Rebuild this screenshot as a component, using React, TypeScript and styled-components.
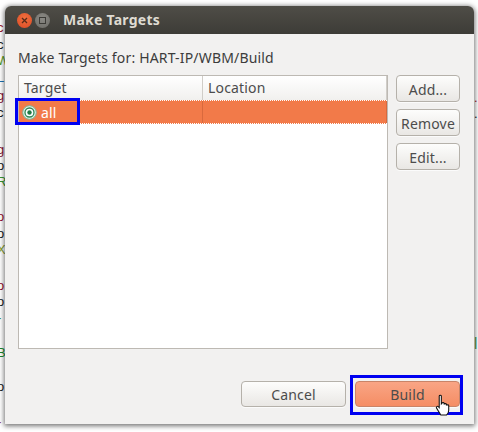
import React from 'react';
import styled, { createGlobalStyle } from 'styled-components';

const Global = createGlobalStyle`
  html, body { margin: 0; padding: 0; background: #fff; }
  body { font-family: "Noto Sans", "Open Sans", sans-serif; }
`;

const Desktop = styled.div`
  position: relative;
  width: 478px;
  height: 432px;
  overflow: hidden;
  background: #fff;
`;

const Scraps = styled.div`
  position: absolute;
  top: 0;
  width: 5px;
  height: 432px;
  overflow: hidden;
  font: 13px/16px "Liberation Sans", sans-serif;
  white-space: pre;
`;
const LeftScraps = styled(Scraps)`
  left: 0;
  padding-top: 20px;
`;
const RightScraps = styled(Scraps)`
  right: 0;
  width: 4px;
  padding-top: 90px;
  text-align: left;
`;
const Scrap = styled.div<{ $c: string; $gap?: number }>`
  height: 16px;
  color: ${(p) => p.$c};
  margin-top: ${(p) => p.$gap ?? 0}px;
  text-indent: -3px;
`;
const RightScrap = styled(Scrap)`
  text-indent: 0;
`;

const Window = styled.div`
  position: absolute;
  left: 5px;
  top: 6px;
  width: 469px;
  height: 418px;
  display: flex;
  flex-direction: column;
  background: #f2f1f0;
  border-radius: 6px 6px 0 0;
  box-shadow: 0 1px 5px 1px rgba(0, 0, 0, 0.55);
`;

const TitleBar = styled.div`
  height: 28px;
  flex: none;
  display: flex;
  align-items: center;
  padding-left: 12px;
  background: linear-gradient(#4f4d47, #3d3c37);
  border-radius: 6px 6px 0 0;
`;
const WinButton = styled.div<{ $close?: boolean }>`
  width: 15px;
  height: 15px;
  border-radius: 50%;
  margin-right: 3px;
  display: flex;
  align-items: center;
  justify-content: center;
  background: ${(p) => (p.$close ? 'radial-gradient(circle at 50% 35%, #f0703f, #dc4a24)' : 'radial-gradient(circle at 50% 35%, #8b8a85, #6c6b66)')};
`;
const Title = styled.div`
  margin-left: 10px;
  margin-top: -2px;
  font-size: 14px;
  font-weight: 700;
  letter-spacing: 0.25px;
  color: #dfdbd2;
`;

const Body = styled.div`
  flex: 1;
  display: flex;
  flex-direction: column;
  padding: 14px 14px 17px 13px;
  letter-spacing: 0.17px;
`;
const Caption = styled.div`
  height: 21px;
  font-size: 14px;
  line-height: 20px;
  color: #3c3c3c;
  margin-bottom: 6px;
`;
const Main = styled.div`
  flex: 1;
  display: flex;
  gap: 8px;
`;
const Table = styled.div`
  position: relative;
  width: 370px;
  height: 274px;
  box-sizing: border-box;
  background: #fff;
  border: 1px solid #bdb9b3;
`;
const HeaderRow = styled.div`
  display: flex;
  height: 24px;
  background: linear-gradient(#ffffff, #f1f0ee);
`;
const HeaderCell = styled.div<{ $w: number }>`
  width: ${(p) => p.$w}px;
  box-sizing: border-box;
  padding-left: 5px;
  font-size: 14px;
  line-height: 24px;
  color: #4c4c4c;
  border-right: 1px solid #d0cdc8;
`;
const Row = styled.div`
  display: flex;
  height: 24px;
  background: #f27a49;
  border-top: 1px dotted #fff;
  border-bottom: 1px dotted #fff;
  box-sizing: border-box;
`;
const Cell = styled.div<{ $w: number }>`
  width: ${(p) => p.$w}px;
  box-sizing: border-box;
  display: flex;
  align-items: center;
  padding-left: 3px;
  gap: 4px;
  font-size: 14px;
  color: #fff;
  border-right: 1px solid #d9693d;
`;
const SideButtons = styled.div`
  display: flex;
  flex-direction: column;
  gap: 7px;
  width: 64px;
`;
const Button = styled.div<{ $primary?: boolean; $wide?: boolean }>`
  width: ${(p) => (p.$wide ? '105px' : '64px')};
  height: ${(p) => (p.$wide ? '26px' : '27px')};
  padding-top: ${(p) => (p.$wide ? '0' : '1px')};
  box-sizing: border-box;
  display: flex;
  align-items: center;
  justify-content: center;
  font-size: 14px;
  color: #4c4c4c;
  border-radius: 4px;
  border: 1px solid ${(p) => (p.$primary ? '#c98468' : '#b5b1aa')};
  background: ${(p) => (p.$primary ? 'linear-gradient(#f9a585, #f58d64)' : 'linear-gradient(#fdfdfc, #e9e7e4)')};
  box-shadow: 0 1px 0 rgba(255, 255, 255, 0.7);
`;
const Footer = styled.div`
  display: flex;
  justify-content: flex-end;
  gap: 9px;
  position: relative;
`;
const HighlightAll = styled.div`
  position: absolute;
  left: -4px;
  top: 22px;
  width: 65px;
  height: 27px;
  box-sizing: border-box;
  border: 3px solid #0000f0;
`;
const HighlightBuild = styled.div`
  position: absolute;
  right: -3px;
  top: -6px;
  width: 113px;
  height: 40px;
  box-sizing: border-box;
  border: 3px solid #0000f0;
`;
const Cursor = styled.svg`
  position: absolute;
  left: 435px;
  top: 394px;
`;

const CloseGlyph = () => (
  <svg width="7" height="7" viewBox="0 0 7 7">
    <path d="M1 1l5 5M6 1L1 6" stroke="#5a2a18" strokeWidth="1.3" />
  </svg>
);
const MaxGlyph = () => (
  <svg width="7" height="7" viewBox="0 0 7 7">
    <rect x="0.5" y="0.5" width="6" height="6" fill="none" stroke="#3c3b37" />
  </svg>
);
const TargetIcon = () => (
  <svg width="15" height="15" viewBox="0 0 15 15">
    <circle cx="7.5" cy="7.500" r="6.800" fill="#dcefe4" stroke="#7cb598" />
    <circle cx="7.5" cy="7.500" r="4.500" fill="#fff" stroke="#2f8a56" strokeWidth="1.300" />
    <circle cx="7.5" cy="7.500" r="2.200" fill="#1f7a45" />
  </svg>
);

const left: [string, string, number?][] = [
  ['c', '#a02030'], ['c', '#222', 1], ['W', '#5a9a10'], ['L', '#1c6fb0', 1], ['g', '#8a1538', 2], ['c', '#222', 1],
  ['g', '#8a1538', 21], ['o', '#222'], ['R', '#3a9a30'],
  ['o', '#9a1030', 19], ['o', '#222', 1], ['X', '#8aa030'],
  ['o', '#9a1030', 20], ['o', '#222'], ['-', '#1a8a2a'],
  ['B', '#1a8a2a', 19], ['o', '#222', 18], ['-', '#8a1538', 19],
];

export default function App() {
  return (
    <Desktop>
      <Global />
      <LeftScraps>
        {left.map(([t, c, g], i) => (
          <Scrap key={i} $c={c} $gap={g}>{t}</Scrap>
        ))}
      </LeftScraps>
      <RightScraps>
        <RightScrap $c="#a02030">.</RightScrap>
        <RightScrap $c="#222">.</RightScrap>
        <RightScrap $c="#1a8a2a" $gap={212}>|</RightScrap>
      </RightScraps>
      <Window>
        <TitleBar>
          <WinButton $close><CloseGlyph /></WinButton>
          <WinButton><MaxGlyph /></WinButton>
          <Title>Make Targets</Title>
        </TitleBar>
        <Body>
          <Caption>Make Targets for: HART-IP/WBM/Build</Caption>
          <Main>
            <Table>
              <HeaderRow>
                <HeaderCell $w={184}>Target</HeaderCell>
                <HeaderCell $w={184}>Location</HeaderCell>
              </HeaderRow>
              <Row>
                <Cell $w={184}><TargetIcon />all</Cell>
                <Cell $w={184} />
              </Row>
              <HighlightAll />
            </Table>
            <SideButtons>
              <Button>Add...</Button>
              <Button>Remove</Button>
              <Button>Edit...</Button>
            </SideButtons>
          </Main>
          <Footer>
            <Button $wide>Cancel</Button>
            <Button $wide $primary>Build</Button>
            <HighlightBuild />
          </Footer>
        </Body>
      </Window>
      <Cursor width="19" height="24" viewBox="0 0 18 22">
        <path
          d="M4 1.500c0-1 2-1 2 0V9l.6-.6c0-1 2-1 2 0V9.500c0-1 2.200-1 2.200 0v1c0-.9 2.200-.9 2.200 0v4.500c0 2-1 3.500-2 4.500H5.500L1.500 13c-.8-1.200.8-2.300 1.700-1.300L4 12.600V1.500z"
          fill="#fff"
          stroke="#111"
          strokeWidth="1"
        />
      </Cursor>
    </Desktop>
  );
}
